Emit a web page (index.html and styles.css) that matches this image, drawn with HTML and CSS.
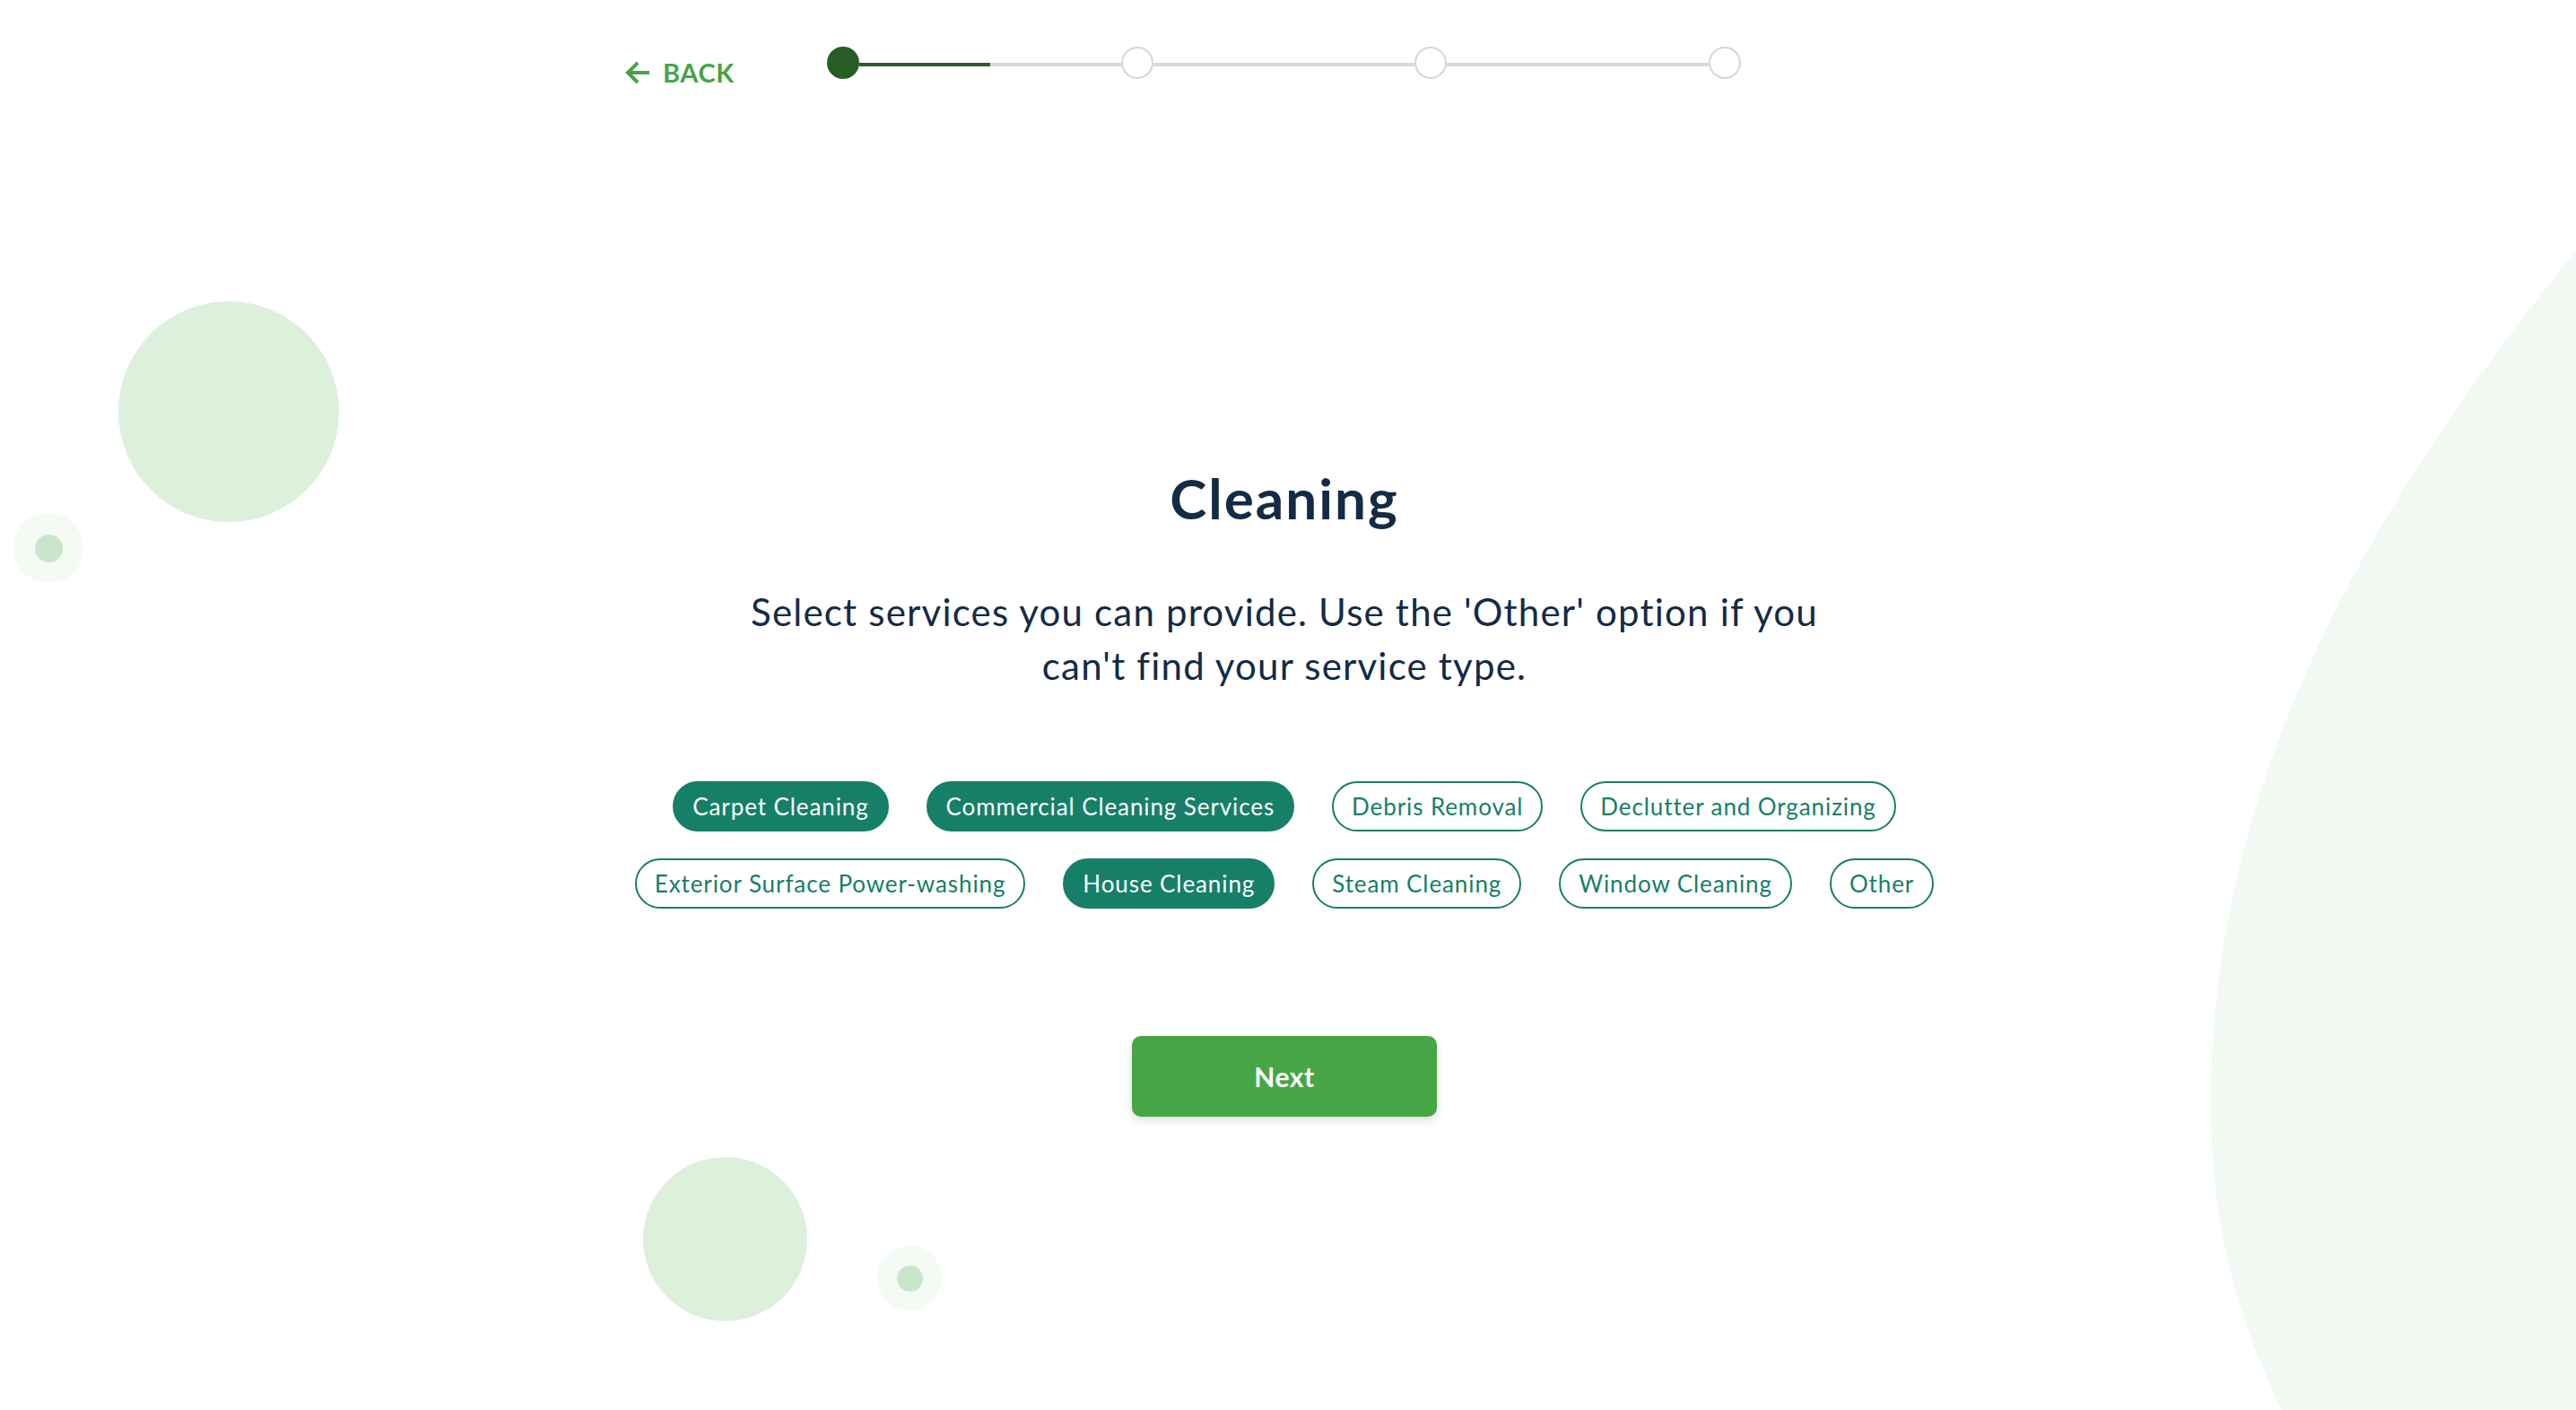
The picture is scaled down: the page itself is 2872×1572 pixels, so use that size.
FILE: index.html
```html
<!DOCTYPE html>
<html lang="en">
<head>
<meta charset="utf-8">
<title>Cleaning</title>
<link rel="stylesheet" href="styles.css">
</head>
<body>
<div class="decor" aria-hidden="true">
  <svg class="blob" viewBox="0 0 2872 1572" width="2872" height="1572">
    <path d="M2872 279 C2684 513 2465 830 2465 1230 C2465 1380 2500 1500 2580 1640 L2872 1640 Z" fill="#f2f8f2"/>
  </svg>
  <span class="circle big-left"></span>
  <span class="ring ring-left"><span class="ring-dot"></span></span>
  <span class="circle big-bottom"></span>
  <span class="ring ring-bottom"><span class="ring-dot small"></span></span>
</div>

<div class="page">
  <header class="header">
    <a class="back" href="#">
      <svg class="back-icon" viewBox="0 0 28 26" width="28" height="26">
        <path d="M27 13 H4 M14 2 L3 13 L14 24" fill="none" stroke="#46a546" stroke-width="4"/>
      </svg>
      <span>BACK</span>
    </a>
    <div class="progress">
      <span class="step done"></span>
      <span class="seg half"></span>
      <span class="step"></span>
      <span class="seg"></span>
      <span class="step"></span>
      <span class="seg"></span>
      <span class="step"></span>
    </div>
  </header>

  <main class="main">
    <h1 class="title">Cleaning</h1>
    <p class="subtitle">Select services you can provide. Use the 'Other' option if you<br>can't find your service type.</p>

    <div class="chips">
      <button class="chip selected">Carpet Cleaning</button>
      <button class="chip selected">Commercial Cleaning Services</button>
      <button class="chip">Debris Removal</button>
      <button class="chip">Declutter and Organizing</button>
      <button class="chip">Exterior Surface Power-washing</button>
      <button class="chip selected">House Cleaning</button>
      <button class="chip">Steam Cleaning</button>
      <button class="chip">Window Cleaning</button>
      <button class="chip">Other</button>
    </div>

    <button class="next">Next</button>
  </main>
</div>
</body>
</html>
```

FILE: styles.css
```css
html, body {
  margin: 0;
  padding: 0;
}

body {
  width: 2872px;
  height: 1572px;
  overflow: hidden;
  background: #ffffff;
  font-family: "Lato", "Open Sans", sans-serif;
  color: #142b45;
  position: relative;
}

.decor {
  position: absolute;
  inset: 0;
  z-index: 0;
  pointer-events: none;
}

.blob {
  position: absolute;
  left: 0;
  top: 0;
}

.circle {
  position: absolute;
  border-radius: 50%;
  background: #dcf0dc;
}

.big-left {
  left: 132px;
  top: 336px;
  width: 246px;
  height: 246px;
}

.big-bottom {
  left: 717px;
  top: 1290px;
  width: 183px;
  height: 183px;
}

.ring {
  position: absolute;
  border-radius: 50%;
  background: #f4faf4;
  display: flex;
  align-items: center;
  justify-content: center;
}

.ring-left {
  left: 15px;
  top: 572px;
  width: 78px;
  height: 78px;
}

.ring-bottom {
  left: 978px;
  top: 1389px;
  width: 72px;
  height: 72px;
}

.ring-dot {
  width: 31px;
  height: 31px;
  border-radius: 50%;
  background: #c9e6cd;
}

.ring-dot.small {
  width: 29px;
  height: 29px;
}

.page {
  position: relative;
  z-index: 1;
  padding-right: 8px;
}

/* Header */
.header {
  width: 1470px;
  margin: 0 auto;
  padding-top: 52px;
  display: flex;
  align-items: flex-start;
}

.back {
  width: 225px;
  flex-shrink: 0;
  margin-top: 14px;
  display: flex;
  align-items: center;
  gap: 14px;
  text-decoration: none;
  color: #46a546;
  font-weight: 700;
  font-size: 29px;
  line-height: 29px;
  letter-spacing: 0.6px;
}

.back-icon {
  display: block;
  flex-shrink: 0;
}

.progress {
  width: 1019px;
  height: 36px;
  display: flex;
  align-items: center;
}

.step {
  width: 36px;
  height: 36px;
  box-sizing: border-box;
  border-radius: 50%;
  border: 2px solid #d6d6d6;
  background: #ffffff;
  flex-shrink: 0;
}

.step.done {
  border: none;
  background: #265e26;
}

.seg {
  flex: 1;
  height: 4px;
  margin-top: 4px;
  background: #d9d9d9;
}

.seg.half {
  background: linear-gradient(to right, #265e26 0, #265e26 50%, #d9d9d9 50%, #d9d9d9 100%);
}

/* Main */
.main {
  display: flex;
  flex-direction: column;
  align-items: center;
}

.title {
  margin: 424px 0 0;
  font-size: 62px;
  line-height: 73px;
  font-weight: 700;
  letter-spacing: 2px;
  color: #132b44;
}

.subtitle {
  margin: 60px 0 0;
  font-size: 42px;
  line-height: 60px;
  font-weight: 400;
  text-align: center;
  letter-spacing: 1.2px;
  color: #142b45;
}

.chips {
  width: 1520px;
  margin-top: 99px;
  display: flex;
  flex-wrap: wrap;
  justify-content: center;
  column-gap: 42px;
  row-gap: 30px;
}

.chip {
  height: 56px;
  box-sizing: border-box;
  padding: 0 20px;
  border: 2px solid #167f67;
  border-radius: 28px;
  background: #ffffff;
  color: #167f67;
  font-family: "Lato", "Open Sans", sans-serif;
  font-size: 26px;
  line-height: 52px;
  letter-spacing: 0.9px;
  cursor: pointer;
}

.chip.selected {
  background: #167f67;
  color: #ffffff;
}

.next {
  margin-top: 142px;
  width: 340px;
  height: 90px;
  border: none;
  border-radius: 10px;
  background: #46a645;
  color: #ffffff;
  font-family: "Lato", "Open Sans", sans-serif;
  font-weight: 700;
  font-size: 30px;
  letter-spacing: 0.5px;
  box-shadow: 0 4px 10px rgba(0, 0, 0, 0.14);
  cursor: pointer;
}
```
